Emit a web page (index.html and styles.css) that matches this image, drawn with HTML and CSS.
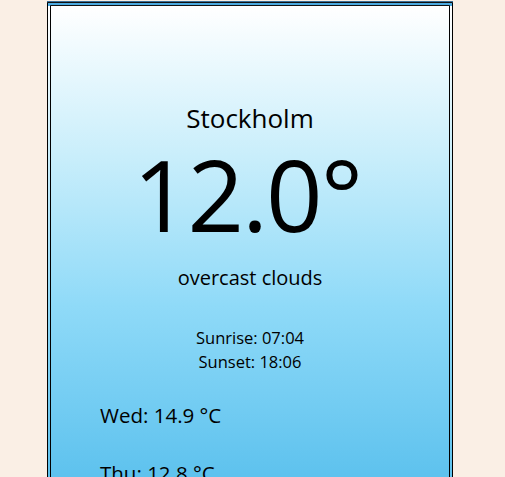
FILE: index.html
```html
<!DOCTYPE html>
<html lang="en">
<head>
<meta charset="utf-8">
<title>Weather</title>
<link rel="stylesheet" href="styles.css">
</head>
<body>
  <main class="card">
    <section class="current">
      <h1 class="city">Stockholm</h1>
      <div class="temp">12.0°</div>
      <p class="desc">overcast clouds</p>
      <div class="sun">
        <p>Sunrise: 07:04</p>
        <p>Sunset: 18:06</p>
      </div>
    </section>
    <ul class="forecast">
      <li>Wed: 14.9 °C</li>
      <li>Thu: 12.8 °C</li>
      <li>Fri: 11.3 °C</li>
    </ul>
  </main>
</body>
</html>
```

FILE: styles.css
```css
html, body {
  margin: 0;
  padding: 0;
  background: #faefe5;
  overflow: hidden;
}
body {
  font-family: "Open Sans", "DejaVu Sans", sans-serif;
  color: #000;
}
.card {
  box-sizing: border-box;
  width: 406px;
  height: 760px;
  margin: 2px 0 0 47px;
  border: 4px double #000;
  border-top-color: #111;
  box-shadow: 0 -1px 0 #3d6f96;
  background: linear-gradient(to bottom, #ffffff 0px, #c9eefb 150px, #8fdaf8 300px, #5ec2ee 470px, #4aa9e0 760px);
  padding: 97px 48px 0;
}
.current {
  display: flex;
  flex-direction: column;
  align-items: center;
}
.city {
  margin: 0;
  font-weight: 400;
  font-size: 26px;
  line-height: 30px;
}
.temp {
  font-size: 99px;
  line-height: 120px;
  margin-top: 1px;
  margin-left: -6px;
  letter-spacing: -2px;
}
.desc {
  margin: 11px 0 0;
  font-size: 20px;
  line-height: 26px;
}
.sun {
  margin-top: 35px;
  text-align: center;
  font-size: 16.5px;
  line-height: 24px;
}
.sun p { margin: 0; }
.forecast {
  list-style: none;
  margin: 28px 0 0;
  padding: 0 0 0 1px;
  display: flex;
  flex-direction: column;
  gap: 32px;
}
.forecast li {
  font-size: 20.5px;
  line-height: 26px;
}
```
